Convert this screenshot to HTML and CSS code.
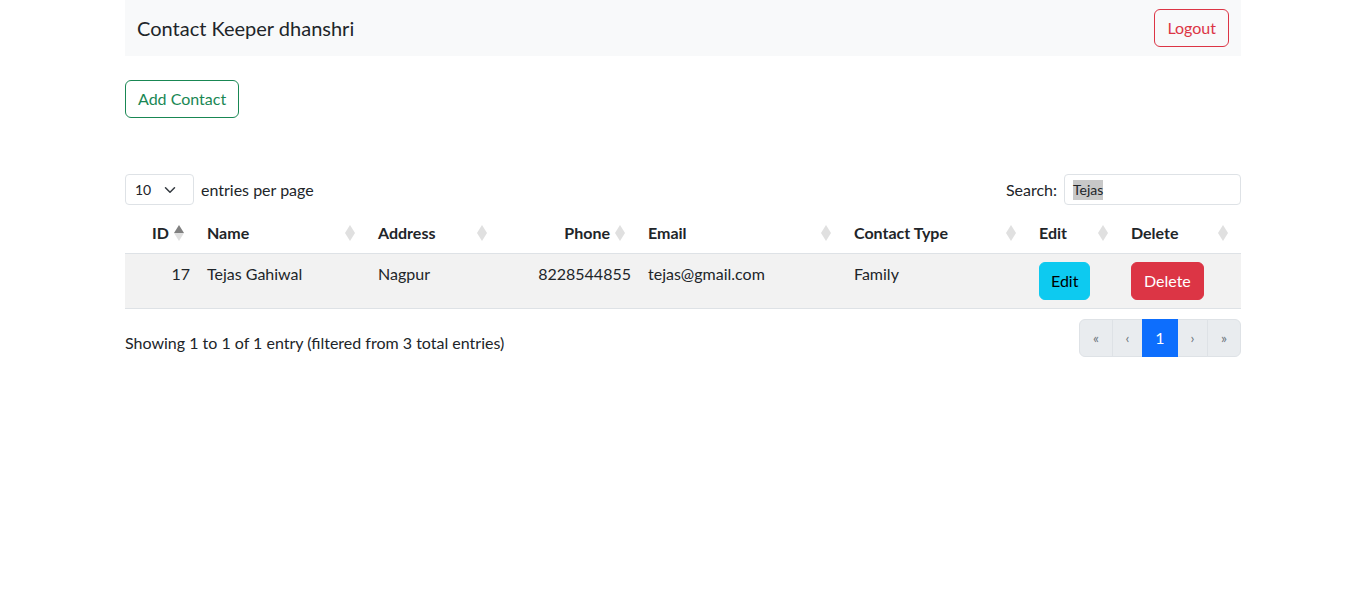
FILE: index.html
```html
<!DOCTYPE html>
<html lang="en">
<head>
<meta charset="utf-8">
<title>Contact Keeper</title>
<link rel="stylesheet" href="styles.css">
</head>
<body>
<div class="container">
  <nav class="navbar">
    <span class="brand">Contact Keeper dhanshri</span>
    <button class="btn btn-outline-danger">Logout</button>
  </nav>

  <button class="btn btn-outline-success add-btn">Add Contact</button>

  <div class="dt-wrapper">
    <div class="dt-top">
      <div class="dt-length">
        <div class="select-sm">
          <span>10</span>
          <svg width="12" height="12" viewBox="0 0 16 16"><path d="M2 5l6 6 6-6" fill="none" stroke="#343a40" stroke-width="2" stroke-linecap="round" stroke-linejoin="round"/></svg>
        </div>
        <label>entries per page</label>
      </div>
      <div class="dt-search">
        <label>Search:</label>
        <div class="input-sm"><span class="selected">Tejas</span></div>
      </div>
    </div>

    <table class="table">
      <colgroup>
        <col class="c-id"><col class="c-name"><col class="c-addr"><col class="c-phone"><col class="c-email"><col class="c-type"><col class="c-edit"><col class="c-del">
      </colgroup>
      <thead>
        <tr>
          <th class="num sorted">ID<span class="sort"></span></th>
          <th>Name<span class="sort"></span></th>
          <th>Address<span class="sort"></span></th>
          <th class="num">Phone<span class="sort"></span></th>
          <th>Email<span class="sort"></span></th>
          <th>Contact Type<span class="sort"></span></th>
          <th>Edit<span class="sort"></span></th>
          <th>Delete<span class="sort"></span></th>
        </tr>
      </thead>
      <tbody>
        <tr>
          <td class="num">17</td>
          <td>Tejas Gahiwal</td>
          <td>Nagpur</td>
          <td class="num">8228544855</td>
          <td>tejas@gmail.com</td>
          <td>Family</td>
          <td><button class="btn btn-info">Edit</button></td>
          <td><button class="btn btn-danger">Delete</button></td>
        </tr>
      </tbody>
    </table>

    <div class="dt-bottom">
      <div class="dt-info">Showing 1 to 1 of 1 entry (filtered from 3 total entries)</div>
      <ul class="pagination">
        <li class="page disabled first">«</li>
        <li class="page disabled">‹</li>
        <li class="page active">1</li>
        <li class="page disabled">›</li>
        <li class="page disabled last">»</li>
      </ul>
    </div>
  </div>
</div>
</body>
</html>
```

FILE: styles.css
```css
* { box-sizing: border-box; }

body {
  margin: 0;
  font-family: "Segoe UI", Lato, "Noto Sans", sans-serif;
  font-size: 16px;
  line-height: 1.5;
  color: #212529;
  background: #fff;
}

.container {
  width: 1116px;
  margin: 0 auto;
}

.navbar {
  display: flex;
  align-items: center;
  justify-content: space-between;
  height: 56px;
  padding: 0 12px;
  background: #f8f9fa;
}

.brand {
  font-size: 20px;
  line-height: 30px;
  color: #212529;
}

.btn {
  display: inline-block;
  font-family: inherit;
  font-size: 16px;
  line-height: 24px;
  padding: 6px 12px;
  border: 1px solid transparent;
  border-radius: 6px;
  background: transparent;
  cursor: pointer;
}

.btn-outline-danger {
  color: #dc3545;
  border-color: #dc3545;
}

.btn-outline-success {
  color: #198754;
  border-color: #198754;
}

.btn-info {
  background: #0dcaf0;
  border-color: #0dcaf0;
  color: #000;
  padding: 6px 11px;
}

.btn-danger {
  background: #dc3545;
  border-color: #dc3545;
  color: #fff;
}

.add-btn {
  margin-top: 24px;
}

.dt-wrapper {
  margin-top: 56px;
}

.dt-top {
  display: flex;
  justify-content: space-between;
  align-items: center;
  height: 31px;
}

.dt-length {
  display: flex;
  align-items: center;
  gap: 7px;
}

.select-sm {
  width: 69px;
  height: 31px;
  border: 1px solid #dee2e6;
  border-radius: 4px;
  display: flex;
  align-items: center;
  justify-content: space-between;
  padding: 0 17px 0 9px;
  font-size: 14px;
}

.dt-search {
  display: flex;
  align-items: center;
  gap: 7px;
}

.input-sm {
  width: 177px;
  height: 31px;
  border: 1px solid #dee2e6;
  border-radius: 4px;
  display: flex;
  align-items: center;
  padding: 0 8px;
  font-size: 14px;
}

.selected {
  background: #c8c8c8;
  line-height: 20px;
}

.table {
  width: 100%;
  border-collapse: collapse;
  table-layout: fixed;
  margin-top: 8px;
}

.c-id { width: 72px; }
.c-name { width: 171px; }
.c-addr { width: 132px; }
.c-phone { width: 138px; }
.c-email { width: 206px; }
.c-type { width: 185px; }
.c-edit { width: 92px; }
.c-del { width: 120px; }

th, td {
  padding: 8px 10px;
  text-align: left;
  vertical-align: top;
}

th {
  position: relative;
  font-weight: 700;
  padding-right: 30px;
  border-bottom: 1px solid #dee2e6;
}

td {
  background: #f2f2f2;
  border-bottom: 1px solid #dee2e6;
}

.num { text-align: right; }
td.num { padding-right: 7px; }
th.num { padding-right: 28px; }

.sort {
  position: absolute;
  right: 12px;
  top: 12px;
  width: 11px;
  height: 16px;
}

.sort::before,
.sort::after {
  content: "";
  position: absolute;
  left: 0;
  width: 0;
  height: 0;
  border-left: 5.5px solid transparent;
  border-right: 5.5px solid transparent;
}

.sort::before {
  top: 0;
  border-bottom: 8px solid #e0e0e0;
}

.sort::after {
  bottom: 0;
  border-top: 8px solid #e0e0e0;
}

.sorted .sort::before {
  border-bottom-color: #808080;
}

.dt-bottom {
  display: flex;
  justify-content: space-between;
  align-items: flex-start;
  margin-top: 10px;
}

.dt-info {
  padding-top: 12px;
}

.pagination {
  display: flex;
  list-style: none;
  margin: 0;
  padding: 0;
}

.page {
  height: 38px;
  line-height: 36px;
  text-align: center;
  font-size: 14px;
  border: 1px solid #dee2e6;
  margin-left: -1px;
}

.page.disabled {
  background: #e9ecef;
  color: #6c757d;
  width: 31px;
}

.page.first, .page.last { width: 34px; }

.page.first { border-radius: 6px 0 0 6px; margin-left: 0; }
.page.last { border-radius: 0 6px 6px 0; }

.page.active {
  background: #0d6efd;
  border-color: #0d6efd;
  color: #fff;
  width: 36px;
  font-size: 16px;
  position: relative;
}
```
